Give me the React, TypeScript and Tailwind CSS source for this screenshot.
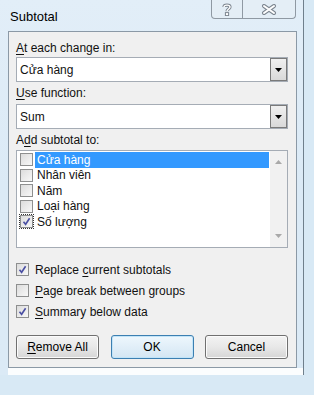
import React from 'react';

const fields = [
  { label: 'Cửa hàng', checked: false, selected: true },
  { label: 'Nhân viên', checked: false, selected: false },
  { label: 'Năm', checked: false, selected: false },
  { label: 'Loại hàng', checked: false, selected: false },
  { label: 'Số lượng', checked: true, selected: false, focused: true },
];

function Check({ checked }: { checked: boolean }) {
  return (
    <span className="flex h-[13px] w-[13px] shrink-0 items-center justify-center border border-[#8e8f8f] bg-gradient-to-br from-[#dcdcdc] to-[#f8f8f8]">
      {checked && (
        <svg width="9" height="9" viewBox="0 0 9 9">
          <path d="M1.5 4.8 L3.6 7.3 L7.6 1.2" fill="none" stroke="#4a4fa3" strokeWidth="1.6" />
        </svg>
      )}
    </span>
  );
}

function Combo({ value }: { value: string }) {
  return (
    <div className="flex h-[25px] w-[272px] items-stretch border border-[#a5acb5] bg-white">
      <span className="flex flex-1 items-center pl-[3px]">{value}</span>
      <span className="flex w-[17px] items-center justify-center border border-[#7a7a7a] bg-gradient-to-b from-[#f0f0f0] to-[#d9d9d9]">
        <svg width="7" height="4" viewBox="0 0 7 4">
          <path d="M0 0 H7 L3.5 4 Z" fill="#000" />
        </svg>
      </span>
    </div>
  );
}

function Btn({ children, primary }: { children: React.ReactNode; primary?: boolean }) {
  return (
    <button
      className={
        primary
          ? 'h-[24px] w-[83px] rounded-[3px] border border-[#3c7fb1] bg-gradient-to-b from-[#eef7fd] to-[#d4e6f3] text-[12px] text-black shadow-[inset_0_0_0_1px_#c2e4f8]'
          : 'h-[24px] w-[83px] rounded-[3px] border border-[#707070] bg-gradient-to-b from-[#f3f3f3] via-[#e8e8e8] to-[#d6d6d6] text-[12px] text-black shadow-[inset_0_0_0_1px_#fbfbfb]'
      }
    >
      {children}
    </button>
  );
}

export default function App() {
  return (
    <div className="h-[395px] w-[314px] overflow-hidden bg-[#d8e9f5] font-['Liberation_Sans',sans-serif] text-[12px] text-[#111]">
      <div className="flex h-[375px] w-[304px] flex-col border-r border-[#6f7f8c] bg-gradient-to-b from-[#e2eef8] via-[#dbeaf6] to-[#dbeaf6]">
        {/* title bar */}
        <div className="flex h-[31px] items-start justify-between">
          <span className="ml-[10px] mt-[7px] text-[13px] text-black">Subtotal</span>
          <div className="mr-[7px] flex">
            <span className="flex h-[19px] w-[32px] items-center justify-center rounded-bl-[4px] border border-t-0 border-[#8f99a3] bg-[#e6eef5]/70">
              <svg width="10" height="13" viewBox="0 0 10 13">
                <path d="M2 4 C2 1.5 8 1.5 8 4 C8 6 5 6 5 8.3" fill="none" stroke="#7d8690" strokeWidth="3.2" />
                <path d="M2 4 C2 1.5 8 1.5 8 4 C8 6 5 6 5 8.3" fill="none" stroke="#fff" strokeWidth="1.4" />
                <rect x="3.4" y="9.6" width="3.2" height="3" fill="#fff" stroke="#7d8690" strokeWidth="1" />
              </svg>
            </span>
            <span className="flex h-[19px] w-[53px] items-center justify-center rounded-br-[4px] border border-l-0 border-t-0 border-[#8f99a3] bg-[#e6eef5]/70">
              <svg width="16" height="11" viewBox="0 0 16 11">
                <path d="M3 2 L13 9 M13 2 L3 9" stroke="#7d8690" strokeWidth="4" strokeLinecap="round" />
                <path d="M3 2 L13 9 M13 2 L3 9" stroke="#fff" strokeWidth="2" strokeLinecap="round" />
              </svg>
            </span>
          </div>
        </div>

        {/* client area */}
        <div className="ml-[8px] flex h-[337px] w-[289px] flex-col border border-[#8b99a6] bg-[#f0f0f0] pl-[7px] pt-[8px]">
          <div className="h-[16px] leading-[16px]">
            <span className="underline underline-offset-2">A</span>t each change in:
          </div>
          <div className="mt-[1px]">
            <Combo value="Cửa hàng" />
          </div>

          <div className="mt-[3px] h-[16px] leading-[16px]">
            <span className="underline underline-offset-2">U</span>se function:
          </div>
          <div className="mt-[3px]">
            <Combo value="Sum" />
          </div>

          <div className="mt-[3px] h-[16px] leading-[16px]">
            A<span className="underline underline-offset-2">d</span>d subtotal to:
          </div>
          <div className="mt-[2px] flex h-[98px] w-[272px] border border-[#a5acb5] bg-white">
            <div className="flex-1 pl-[3px] pt-[1px]">
              {fields.map((f) => (
                <div key={f.label} className="flex h-[15.5px] items-center">
                  <span className={f.focused ? 'outline outline-1 outline-dotted outline-[#333] outline-offset-[0px]' : ''}>
                    <Check checked={f.checked} />
                  </span>
                  <span
                    className={
                      f.selected
                        ? 'ml-[2px] mr-[1px] flex h-full flex-1 items-center bg-[#3399ff] pl-[2px] text-white'
                        : 'ml-[2px] flex h-full flex-1 items-center pl-[2px]'
                    }
                  >
                    {f.label}
                  </span>
                </div>
              ))}
            </div>
            <div className="flex w-[17px] flex-col items-center justify-between bg-[#f1f1f1] py-[9px]">
              <svg width="7" height="4" viewBox="0 0 7 4">
                <path d="M0 4 H7 L3.5 0 Z" fill="#a9a9a9" />
              </svg>
              <svg width="7" height="4" viewBox="0 0 7 4">
                <path d="M0 0 H7 L3.5 4 Z" fill="#a9a9a9" />
              </svg>
            </div>
          </div>

          <div className="mt-[11px] flex flex-col">
            <div className="flex h-[21px] items-center gap-[6px]">
              <Check checked />
              <span>
                Replace <span className="underline underline-offset-2">c</span>urrent subtotals
              </span>
            </div>
            <div className="flex h-[21px] items-center gap-[6px]">
              <Check checked={false} />
              <span>
                <span className="underline underline-offset-2">P</span>age break between groups
              </span>
            </div>
            <div className="flex h-[21px] items-center gap-[6px]">
              <Check checked />
              <span>
                <span className="underline underline-offset-2">S</span>ummary below data
              </span>
            </div>
          </div>

          <div className="mt-[13px] flex w-[272px] justify-between">
            <Btn>
              <span className="underline underline-offset-2">R</span>emove All
            </Btn>
            <Btn primary>OK</Btn>
            <Btn>Cancel</Btn>
          </div>
        </div>
        <div className="ml-[8px] flex-1 bg-[#fbfdfe]" />
      </div>
    </div>
  );
}
